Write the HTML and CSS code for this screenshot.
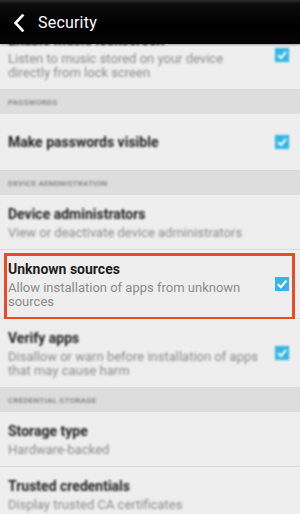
FILE: index.html
```html
<!DOCTYPE html>
<html lang="en">
<head>
<meta charset="utf-8">
<title>Security</title>
<link rel="stylesheet" href="styles.css">
</head>
<body>
<header class="appbar">
  <svg class="back" width="12" height="18" viewBox="0 0 12 18"><path d="M9.5 1.5 L2.5 9 L9.5 16.5" fill="none" stroke="#fff" stroke-width="2.6" stroke-linecap="square"/></svg>
  <span class="appbar-title">Security</span>
</header>
<main class="list">
  <div class="row">
    <div class="text soft">
      <div class="title">Enable music lockscreen</div>
      <div class="sub">Listen to music stored on your device<br>directly from lock screen</div>
    </div>
    <span class="check soft"><svg viewBox="0 0 14 14"><path d="M3 7.2 L6 10 L11.2 3.8" fill="none" stroke="#fff" stroke-width="2"/></svg></span>
  </div>
  <div class="section"><span class="soft">Passwords</span></div>
  <div class="row single">
    <div class="text soft">
      <div class="title">Make passwords visible</div>
    </div>
    <span class="check soft"><svg viewBox="0 0 14 14"><path d="M3 7.2 L6 10 L11.2 3.8" fill="none" stroke="#fff" stroke-width="2"/></svg></span>
  </div>
  <div class="section"><span class="soft">Device administration</span></div>
  <div class="row">
    <div class="text soft">
      <div class="title">Device administrators</div>
      <div class="sub">View or deactivate device administrators</div>
    </div>
  </div>
  <div class="row highlight">
    <div class="text">
      <div class="title">Unknown sources</div>
      <div class="sub">Allow installation of apps from unknown sources</div>
    </div>
    <span class="check"><svg viewBox="0 0 14 14"><path d="M2.8 7.2 L5.8 10.2 L11.4 3.6" fill="none" stroke="#fff" stroke-width="2.2"/></svg></span>
  </div>
  <div class="row">
    <div class="text soft">
      <div class="title">Verify apps</div>
      <div class="sub">Disallow or warn before installation of apps that may cause harm</div>
    </div>
    <span class="check soft"><svg viewBox="0 0 14 14"><path d="M3 7.2 L6 10 L11.2 3.8" fill="none" stroke="#fff" stroke-width="2"/></svg></span>
  </div>
  <div class="section"><span class="soft">Credential storage</span></div>
  <div class="row">
    <div class="text soft">
      <div class="title">Storage type</div>
      <div class="sub">Hardware-backed</div>
    </div>
  </div>
  <div class="row">
    <div class="text soft">
      <div class="title">Trusted credentials</div>
      <div class="sub">Display trusted CA certificates</div>
    </div>
  </div>
</main>
</body>
</html>
```
FILE: styles.css
```css
* { box-sizing: border-box; }
html, body {
  margin: 0;
  padding: 0;
  height: 100%;
  overflow: hidden;
  background: #eeeeee;
  font-family: Roboto, "Liberation Sans", sans-serif;
}
.appbar {
  position: relative;
  z-index: 2;
  height: 44px;
  display: flex;
  align-items: center;
  padding-left: 13px;
  gap: 13px;
  background: linear-gradient(#2c2c2c 0, #0c0c0c 4px, #000 60%, #050505 100%);
  box-shadow: 0 1px 2px rgba(0,0,0,0.35);
}
.back { display: block; margin-top: 1px; }
.appbar-title {
  color: #fff;
  font-size: 16px;
  letter-spacing: 0.2px;
}
.list {
  margin-top: -23px;
  display: flex;
  flex-direction: column;
}
.row {
  position: relative;
  display: flex;
  align-items: center;
  padding: 9px 11px 9px 8px;
  border-bottom: 1px solid #dadada;
  background: #eeeeee;
}
.row.single {
  min-height: 57px;
  padding-top: 8px;
  padding-bottom: 8px;
}
.text { flex: 1; min-width: 0; }
.title {
  font-size: 14px;
  line-height: 20px;
  font-weight: 700;
  color: #1e1e1e;
}
.sub {
  margin-top: 2px;
  font-size: 13px;
  line-height: 14px;
  color: #8c8c8c;
  padding-right: 2px;
}
.check {
  flex: none;
  width: 14px;
  height: 14px;
  background: #33b5e5;
  display: block;
}
.check svg { display: block; width: 14px; height: 14px; }
.section {
  height: 24px;
  display: flex;
  align-items: center;
  padding-left: 8px;
  background: #dddddd;
  font-size: 8px;
  font-weight: 700;
  text-transform: uppercase;
  letter-spacing: 0.2px;
  color: #8a8a8a;
}
.soft { filter: blur(1.3px); }
.highlight::after {
  content: "";
  position: absolute;
  top: 3px;
  bottom: -2px;
  left: 4px;
  right: 5px;
  border: 3px solid #ea4b22;
  pointer-events: none;
}
```
